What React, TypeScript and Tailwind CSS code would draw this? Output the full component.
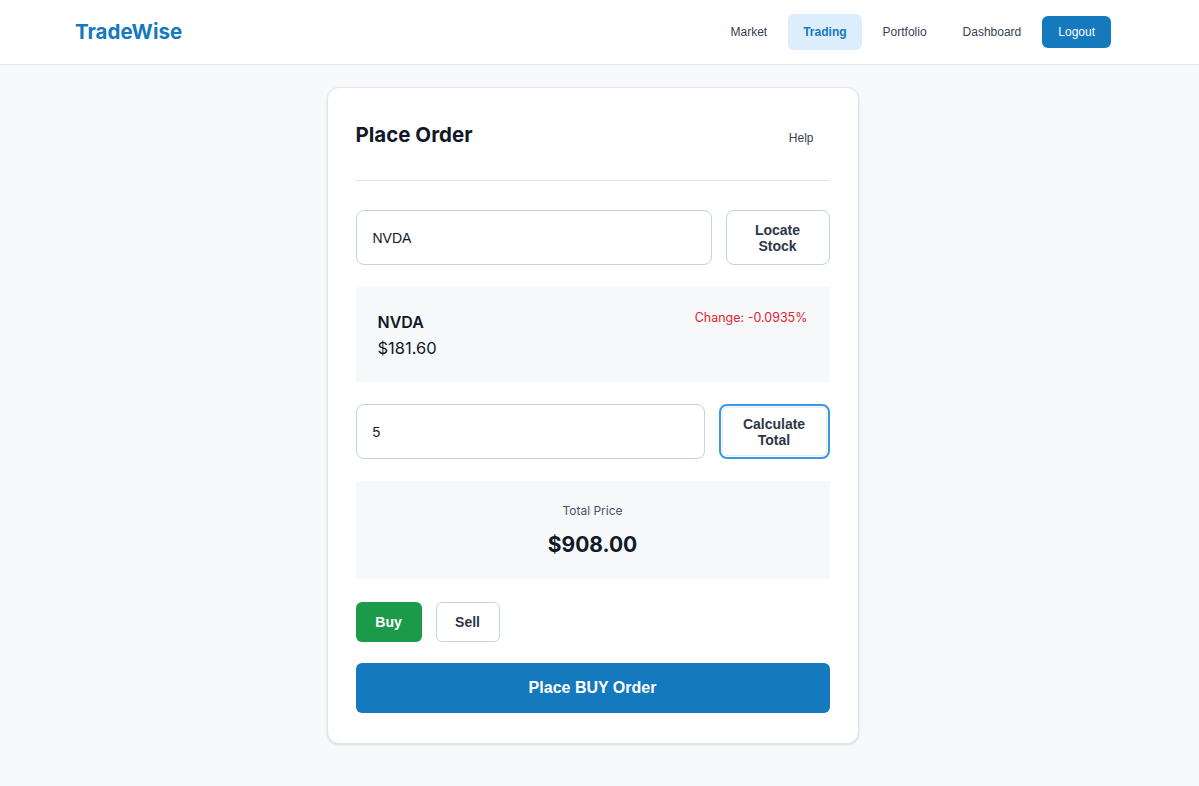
import React, { useState } from 'react';

const navLinks = ['Market', 'Trading', 'Portfolio', 'Dashboard'];

export default function App() {
  const [symbol, setSymbol] = useState('NVDA');
  const [qty, setQty] = useState('5');
  const [side, setSide] = useState<'BUY' | 'SELL'>('BUY');

  const price = 181.6;
  const total = (price * Number(qty || 0)).toFixed(2);

  return (
    <div className="min-h-screen bg-[#f7f9fb] font-['Inter',sans-serif] text-[#111827]">
      {/* Top nav */}
      <header className="h-[65px] bg-white border-b border-[#dfe6ee]">
        <div className="h-16 flex items-center justify-between pl-[75px] pr-[88px]">
          <div className="text-[20.5px] font-bold text-[#1479bd]">TradeWise</div>
          <nav className="flex items-center gap-[6px] font-['Liberation_Sans',Arial,sans-serif] text-[12px]">
            {navLinks.map(link =>
              link === 'Trading' ? (
                <a key={link} className="px-[15px] py-[10px] leading-4 rounded-md bg-[#dcedfd] text-[#1479bd] font-bold">
                  {link}
                </a>
              ) : (
                <a key={link} className="px-[15px] py-[10px] leading-4 text-[#374151]">
                  {link}
                </a>
              )
            )}
            <button className="h-8 px-4 rounded-md bg-[#1479bd] text-white text-[12px] font-['Liberation_Sans',Arial,sans-serif]">
              Logout
            </button>
          </nav>
        </div>
      </header>

      <main className="flex justify-center pt-[22px] pb-10 pr-[14px]">
        <div className="w-[532px] bg-white border border-[#dfe6ee] rounded-xl shadow-sm p-7 pb-[30px]">
          {/* Card header */}
          <div className="flex items-start justify-between h-[65px] border-b border-[#dfe6ee]">
            <h1 className="text-[20.5px] font-bold leading-9 pt-[1px]">Place Order</h1>
            <button className="mt-[13px] mr-[16px] text-[12px] text-[#374151] font-['Liberation_Sans',Arial,sans-serif]">
              Help
            </button>
          </div>

          {/* Symbol search */}
          <div className="flex gap-[14px] mt-[29px]">
            <input
              value={symbol}
              onChange={e => setSymbol(e.target.value)}
              className="flex-1 h-[55px] px-4 rounded-lg border border-[#c5d3e0] text-[14px] text-[#111827] font-['Liberation_Sans',Arial,sans-serif] outline-none"
            />
            <button className="w-[104px] h-[55px] rounded-lg border border-[#c5d3e0] bg-white text-[14px] font-bold leading-4 text-[#2d3748] font-['Liberation_Sans',Arial,sans-serif]">
              Locate
              <br />
              Stock
            </button>
          </div>

          {/* Stock info */}
          <div className="mt-[22px] h-[95px] bg-[#f7f8fa] px-[22px] pt-[25px] flex justify-between">
            <div>
              <div className="text-[16px] font-semibold leading-5">{symbol}</div>
              <div className="mt-[6px] text-[16.5px] leading-5">${price.toFixed(2)}</div>
            </div>
            <div className="text-[12.5px] text-[#e5222f] leading-4 -mt-[2px]">Change: -0.0935%</div>
          </div>

          {/* Quantity */}
          <div className="flex gap-[14px] mt-[22px]">
            <input
              value={qty}
              onChange={e => setQty(e.target.value)}
              className="flex-1 h-[55px] px-4 rounded-lg border border-[#c5d3e0] text-[14px] text-[#111827] font-['Liberation_Sans',Arial,sans-serif] outline-none"
            />
            <button className="w-[111px] h-[55px] rounded-lg border-2 border-[#3a97e6] outline outline-1 outline-offset-[-4px] outline-[#e3ecf5] bg-white text-[14px] font-bold leading-4 text-[#2d3748] font-['Liberation_Sans',Arial,sans-serif]">
              Calculate
              <br />
              Total
            </button>
          </div>

          {/* Total */}
          <div className="mt-[22px] h-[98px] bg-[#f7f8fa] flex flex-col items-center pt-[22px]">
            <div className="text-[12px] text-[#4b5563] leading-4">Total Price</div>
            <div className="mt-[14px] text-[21px] font-bold leading-6">${total}</div>
          </div>

          {/* Side */}
          <div className="flex gap-[14px] mt-[23px]">
            <button
              onClick={() => setSide('BUY')}
              className={`w-[66px] h-10 rounded-md text-[14px] font-bold font-['Liberation_Sans',Arial,sans-serif] ${
                side === 'BUY' ? 'bg-[#1b9a4a] text-white' : 'bg-white border border-[#c5d3e0] text-[#2d3748]'
              }`}
            >
              Buy
            </button>
            <button
              onClick={() => setSide('SELL')}
              className={`w-16 h-10 rounded-md text-[14px] font-bold font-['Liberation_Sans',Arial,sans-serif] ${
                side === 'SELL' ? 'bg-[#dc2626] text-white' : 'bg-white border border-[#c5d3e0] text-[#2d3748]'
              }`}
            >
              Sell
            </button>
          </div>

          <button className="mt-[21px] w-full h-[50px] rounded-md bg-[#1479bd] text-white text-[16px] font-bold font-['Liberation_Sans',Arial,sans-serif]">
            Place {side} Order
          </button>
        </div>
      </main>
    </div>
  );
}
